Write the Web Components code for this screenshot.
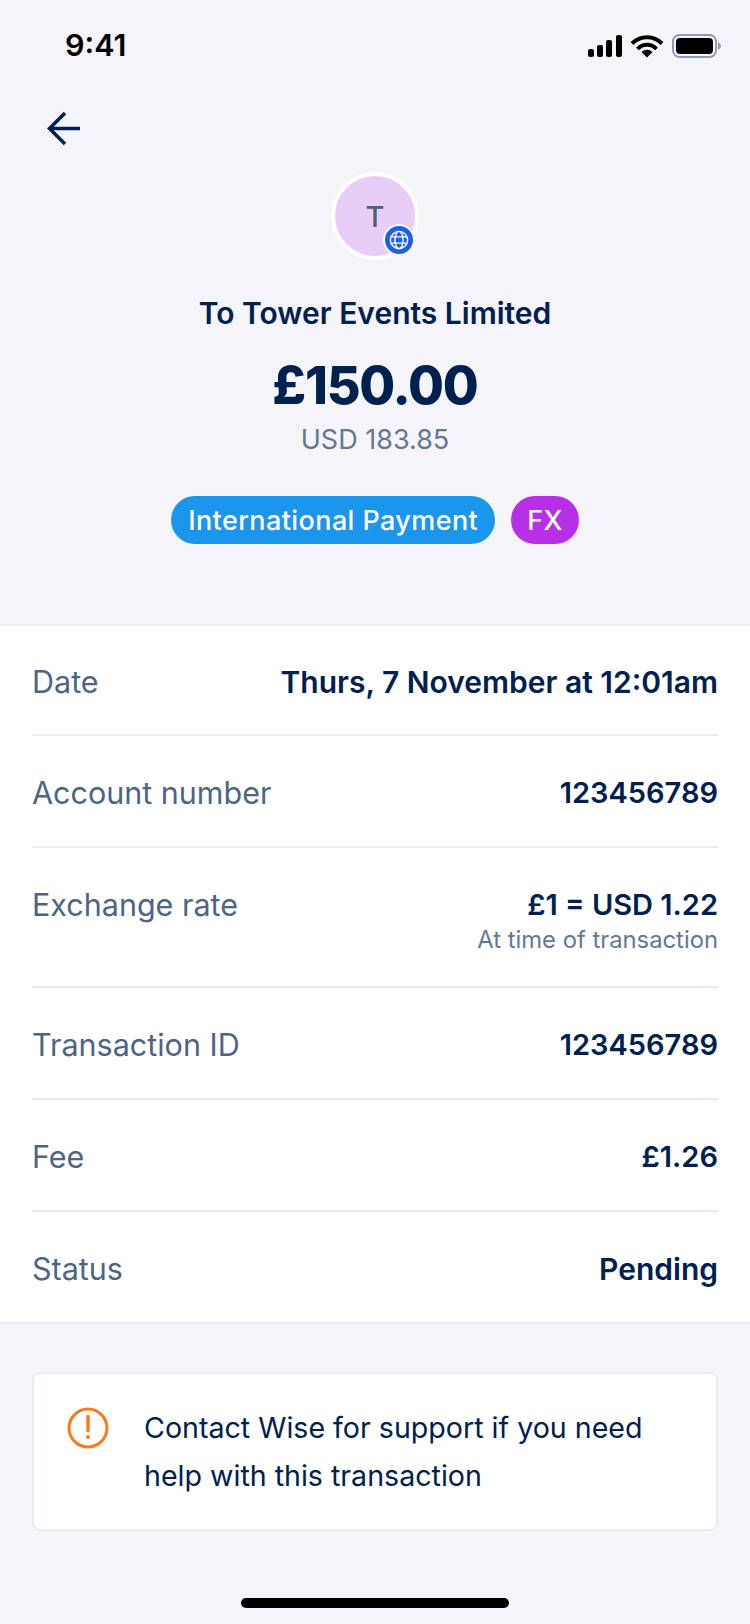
<!DOCTYPE html>
<html>
<head>
<meta charset="utf-8">
<title>Transaction</title>
<style>
    html, body { margin: 0; padding: 0; }
    body {
        width: 750px;
        height: 1624px;
        background: #f4f4f9;
        font-family: "Inter", "Liberation Sans", sans-serif;
        color: #002050;
        overflow: hidden;
    }
</style>
</head>
<body>
<tx-statusbar time="9:41"></tx-statusbar>
<tx-header title="To Tower Events Limited" amount="£150.00" converted="USD 183.85" initial="T">
    <tx-pill color="#1a96ec">International Payment</tx-pill>
    <tx-pill color="#b82fe8" style="padding:0 16px">FX</tx-pill>
</tx-header>
<tx-details>
    <tx-row label="Date" value="Thurs, 7 November at 12:01am" style="--value-size:30px;height:110px;padding-top:36px"></tx-row>
    <tx-row label="Account number" value="123456789"></tx-row>
    <tx-row label="Exchange rate" value="£1 = USD 1.22" note="At time of transaction"></tx-row>
    <tx-row label="Transaction ID" value="123456789"></tx-row>
    <tx-row label="Fee" value="£1.26"></tx-row>
    <tx-row label="Status" value="Pending" style="--value-size:30px;height:110px"></tx-row>
</tx-details>
<tx-notice>Contact Wise for support if you need help with this transaction</tx-notice>
<tx-homebar></tx-homebar>

<script>
class TxStatusbar extends HTMLElement {
    connectedCallback() {
        this.attachShadow({mode: 'open'}).innerHTML = `
        <style>
            :host { display: flex; height: 92px; box-sizing: border-box; padding: 28px 28px 0 65px; justify-content: space-between; align-items: flex-start; }
            .time { font: 600 30.500px/34px "Inter", "Liberation Sans", sans-serif; color: #000; }
            svg { display: block; margin-top: 6px; }
        </style>
        <div class="time">${this.getAttribute('time')}</div>
        <svg width="135" height="24" viewBox="0 0 135 24">
            <rect x="1" y="15" width="6" height="8" rx="2"/>
            <rect x="10" y="11" width="6" height="12" rx="2"/>
            <rect x="19" y="6" width="6" height="17" rx="2"/>
            <rect x="29" y="1" width="6" height="22" rx="2"/>
            <path d="M45 9.500a21 21 0 0 1 30 0" fill="none" stroke="#000" stroke-width="4"/>
            <path d="M50.500 15a13 13 0 0 1 19 0" fill="none" stroke="#000" stroke-width="4"/>
            <path d="M60 23.500l-5.500-5.500a8 8 0 0 1 11 0z"/>
            <rect x="86" y="1" width="43" height="22" rx="6.500" fill="none" stroke="#8f9bb0" stroke-width="2"/>
            <rect x="89" y="4" width="37" height="16" rx="4"/>
            <path d="M131 8.500c2 .5 3 2 3 3.500s-1 3-3 3.500z" fill="#8f9bb0"/>
        </svg>`;
    }
}
customElements.define("tx-statusbar", TxStatusbar);

class TxPill extends HTMLElement {
    connectedCallback() {
        this.attachShadow({mode: 'open'}).innerHTML = `
        <style>
            :host { display: inline-flex; height: 48px; padding: 0 17px; border-radius: 24px; align-items: center; background: ${this.getAttribute('color')}; color: #fff; font-size: 27px; font-weight: 500; letter-spacing: .4px; white-space: nowrap; }
        </style>
        <slot></slot>`;
    }
}
customElements.define("tx-pill", TxPill);

class TxHeader extends HTMLElement {
    connectedCallback() {
        const get = (name) => this.getAttribute(name);
        this.attachShadow({mode: 'open'}).innerHTML = `
        <style>
            :host { display: block; height: 534px; box-sizing: border-box; padding-top: 19px; border-bottom: 2px solid #e6ecf4; }
            .back { display: block; margin: 0 0 26px 47px; }
            .top { display: flex; flex-direction: column; align-items: center; }
            .avatar { position: relative; width: 80px; height: 80px; border: 4px solid #fff; border-radius: 50%; background: #e8cdf6; display: flex; align-items: center; justify-content: center; color: #4d6080; font-size: 29px; font-weight: 500; }
            .badge { position: absolute; right: 0; bottom: 0; width: 28px; height: 28px; border: 2px solid #fff; border-radius: 50%; background: #1f5fe8; display: flex; align-items: center; justify-content: center; }
            h1 { margin: 33px 0 0; font-size: 30px; line-height: 40px; font-weight: 600; }
            .amount { margin-top: 22px; font-size: 52px; line-height: 62px; font-weight: 800; letter-spacing: -1.2px; }
            .converted { margin-top: 6px; font-size: 27px; line-height: 34px; color: #647893; }
            .pills { display: flex; gap: 16px; margin-top: 39px; }
        </style>
        <svg class="back" width="34" height="35" viewBox="0 0 34 35"><path d="M33 17.500H3M18 2L2.500 17.500 18 33" fill="none" stroke="#002050" stroke-width="3.500"/></svg>
        <div class="top">
            <div class="avatar">${get('initial')}
                <div class="badge"><svg width="20" height="20" viewBox="0 0 22 22" fill="none" stroke="#fff" stroke-width="1.500"><circle cx="11" cy="11" r="9.500"/><ellipse cx="11" cy="11" rx="4.500" ry="9.500"/><path d="M2.500 7.500h17M2.500 14.500h17"/></svg></div>
            </div>
            <h1>${get('title')}</h1>
            <div class="amount">${get('amount')}</div>
            <div class="converted">${get('converted')}</div>
            <div class="pills"><slot></slot></div>
        </div>`;
    }
}
customElements.define("tx-header", TxHeader);

class TxDetails extends HTMLElement {
    connectedCallback() {
        this.attachShadow({mode: 'open'}).innerHTML = `
        <style>
            :host { display: block; background: #fff; padding-left: 32px; padding-right: 32px; border-bottom: 2px solid #e6ecf4; }
            ::slotted(tx-row:last-child) { border-bottom: none; }
        </style>
        <slot></slot>`;
    }
}
customElements.define("tx-details", TxDetails);

class TxRow extends HTMLElement {
    connectedCallback() {
        const note = this.getAttribute('note');
        this.attachShadow({mode: 'open'}).innerHTML = `
        <style>
            :host { display: flex; box-sizing: border-box; justify-content: space-between; align-items: flex-start; padding: 37px 0 0; height: 112px; border-bottom: 2px solid #e6ecf4; }
            :host([note]) { height: 140px; }
            .label { font-size: 30.500px; line-height: 40px; color: #4d6485; }
            .value { font-size: var(--value-size, 29px); line-height: 40px; font-weight: 600; text-align: right; }
            .note { font-size: 23.800px; line-height: 30px; color: #647893; }
        </style>
        <div class="label">${this.getAttribute('label')}</div>
        <div>
            <div class="value">${this.getAttribute('value')}</div>
            ${note ? `<div class="note">${note}</div>` : ''}
        </div>`;
    }
}
customElements.define("tx-row", TxRow);

class TxNotice extends HTMLElement {
    connectedCallback() {
        this.attachShadow({mode: 'open'}).innerHTML = `
        <style>
            :host { display: flex; box-sizing: border-box; width: 686px; height: 159px; margin: 48px 0 0 32px; padding: 32px 32px 0 33px; gap: 35px; background: #fff; border: 2px solid #e6ecf4; border-radius: 8px; align-items: flex-start; }
            svg { flex: none; margin-top: 1px; }
            .text { font-size: 28.600px; line-height: 48px; color: #002050; margin-top: -2px; }
        </style>
        <svg width="42" height="42" viewBox="0 0 42 42"><circle cx="21" cy="21" r="19" fill="none" stroke="#f97b1e" stroke-width="3"/><path d="M21 9.500v14" stroke="#f97b1e" stroke-width="3.500" stroke-linecap="round"/><circle cx="21" cy="30" r="2" fill="#f97b1e"/></svg>
        <div class="text"><slot></slot></div>`;
    }
}
customElements.define("tx-notice", TxNotice);

class TxHomebar extends HTMLElement {
    connectedCallback() {
        this.attachShadow({mode: 'open'}).innerHTML = `
        <style>
            :host { display: block; width: 268px; height: 10px; margin: 67px auto 0; border-radius: 5px; background: #000; }
        </style>`;
    }
}
customElements.define("tx-homebar", TxHomebar);
</script>
</body>
</html>
